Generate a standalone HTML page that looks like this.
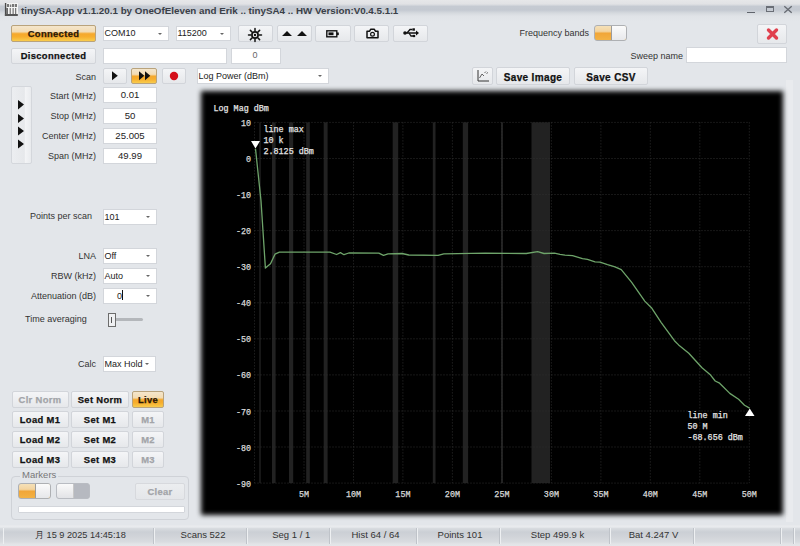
<!DOCTYPE html>
<html><head><meta charset="utf-8">
<style>
*{box-sizing:border-box}
html,body{margin:0;padding:0}
body{width:800px;height:546px;position:relative;overflow:hidden;background:#e3e6ea;font-family:"Liberation Sans",sans-serif;font-size:9px;color:#222}
.a{position:absolute}
.lbl{position:absolute;white-space:nowrap;font-size:9px;color:#333;line-height:12px}
.r{text-align:right}
.btn{position:absolute;padding-top:0.3px;-webkit-text-stroke:0.25px currentColor;border:1px solid #d2d5da;border-radius:2px;background:linear-gradient(#f4f5f7,#e6e8eb);font-weight:bold;font-size:9.4px;letter-spacing:0.35px;text-align:center;color:#111;white-space:nowrap}
.org{border-color:#b9a37c;background:linear-gradient(#f4e6cc 0%,#f3dcb4 38%,#f5a82c 52%,#f7ae2e 72%,#f9cc4c 100%);color:#2a1808}
.dis{color:#a2a4a8}
.tb{position:absolute;background:#fff;border:1px solid #d3d6db;font-size:9px;color:#222;white-space:nowrap}
.cb{position:absolute;background:#fff;border:1px solid #d3d6db;font-size:9px;color:#222;white-space:nowrap;padding-left:0.5px}
.cb:after{content:"";position:absolute;right:6px;top:50%;margin-top:-1px;border-left:2px solid transparent;border-right:2px solid transparent;border-top:2px solid #666}
</style></head><body>

<!-- title bar -->
<div class="a" style="left:0;top:0;width:800px;height:21px;background:linear-gradient(#e6e7e9 0px,#e1e2e5 4px,#c5cad2 6.5px,#c4c9d1 10px,#d5d9de 13px,#e0e3e7 16px,#e3e6ea 21px)"></div>
<svg class="a" style="left:0;top:0" width="22" height="20" viewBox="0 0 22 20">
 <rect x="6" y="3" width="12" height="11" fill="#f4f4f4"/>
 <rect x="4.9" y="3" width="1.4" height="13" fill="#4a4a4a"/>
 <rect x="4.9" y="14" width="12.9" height="2" fill="#555"/>
 <g fill="#777"><rect x="7" y="4" width="2" height="3"/><rect x="9.8" y="4.5" width="1.5" height="2.5"/><rect x="12" y="4" width="2" height="3"/><rect x="14.7" y="4" width="2.3" height="3"/></g>
 <g fill="#5a5a5a"><rect x="6.3" y="8" width="1.6" height="6"/><rect x="9.7" y="8" width="1" height="6"/><rect x="12.6" y="8" width="1" height="6"/><rect x="15.2" y="8" width="1" height="6"/></g>
</svg>
<div class="lbl" style="left:21px;top:4px;font-weight:bold;font-size:9.8px;color:#3a3f48;line-height:14px">tinySA-App v1.1.20.1 by OneOfEleven and Erik .. tinySA4 .. HW Version:V0.4.5.1.1</div>
<div class="a" style="left:747px;top:11.6px;width:8.4px;height:1.4px;background:#60646c"></div>
<div class="a" style="left:766.2px;top:6px;width:7.6px;height:6px;border:0.9px solid #6a6e76;border-top-width:2px"></div>
<svg class="a" style="left:783px;top:5px" width="10" height="9"><path d="M1.3 1.3 L8.7 7.8 M8.7 1.3 L1.3 7.8" stroke="#666a72" stroke-width="1.3"/></svg>

<!-- top row -->
<div class="btn org" style="left:11px;top:25px;width:85px;height:17px;line-height:15px">Connected</div>
<div class="btn" style="left:11px;top:48px;width:85px;height:16px;line-height:14px">Disconnected</div>
<div class="cb" style="left:103px;top:26px;width:66px;height:15px;line-height:13px">COM10</div>
<div class="cb" style="left:176px;top:26px;width:55px;height:15px;line-height:13px">115200</div>
<div class="tb" style="left:103px;top:48px;width:124px;height:15.5px"></div>
<div class="tb" style="left:231px;top:48px;width:50px;height:15.5px;line-height:13.5px;text-align:center;color:#666;padding-right:2px">0</div>

<div class="btn" style="left:238px;top:25px;width:35px;height:17px"></div>
<div class="btn" style="left:277px;top:25px;width:35px;height:17px"></div>
<div class="btn" style="left:315px;top:25px;width:36px;height:17px"></div>
<div class="btn" style="left:354px;top:25px;width:35px;height:17px"></div>
<div class="btn" style="left:393px;top:25px;width:35px;height:17px"></div>
<!-- icons -->
<svg class="a" style="left:247px;top:26.5px" width="16" height="16" viewBox="0 0 16 16">
 <g stroke="#111" stroke-width="1.5" stroke-linecap="round"><path d="M8 1.5v2.3M8 12.2v2.3M1.5 8h2.3M12.2 8h2.3M3.4 3.4l1.6 1.6M11 11l1.6 1.6M12.6 3.4L11 5M5 11l-1.6 1.6"/></g>
 <circle cx="8" cy="8" r="3.1" fill="#f0f0f0" stroke="#111" stroke-width="1.7"/><circle cx="8" cy="8" r="1.2" fill="#111"/>
</svg>
<svg class="a" style="left:281px;top:30px" width="28" height="8"><path d="M1 6 L6 1 L11 6Z M16 6 L21 1 L26 6Z" fill="#111"/></svg>
<svg class="a" style="left:326px;top:29px" width="14" height="9"><rect x="0.8" y="1.8" width="10" height="6" fill="none" stroke="#111" stroke-width="1.4"/><rect x="2.5" y="3.4" width="5" height="2.8" fill="#111"/><rect x="11" y="3.5" width="1.8" height="2.6" fill="#111"/></svg>
<svg class="a" style="left:365.5px;top:28px" width="13" height="11"><path d="M1 3.2 h2.6 l1.2-2 h3.4 l1.2 2 h2.6 v6.6 h-11z" fill="none" stroke="#111" stroke-width="1.5" stroke-linejoin="round"/><circle cx="6.5" cy="6.3" r="1.9" fill="none" stroke="#111" stroke-width="1.2"/></svg>
<svg class="a" style="left:403px;top:27px" width="16" height="12"><path d="M1 6 h12" stroke="#111" stroke-width="1.5"/><path d="M13 3.5 L16 6 L13 8.5Z" fill="#111"/><path d="M4 6 L7 2.5 h2.5 M6 6 L8 9 h2" stroke="#111" stroke-width="1.3" fill="none"/><circle cx="2" cy="6" r="1.8" fill="#111"/><rect x="9.5" y="1.3" width="2.4" height="2.4" fill="#111"/><circle cx="11" cy="9" r="1.3" fill="#111"/></svg>

<div class="lbl r" style="left:479px;top:27px;width:110px">Frequency bands</div>
<div class="a" style="left:593.5px;top:24.7px;width:33px;height:16.8px;border:1px solid #aeb0b3;border-radius:3px;background:linear-gradient(#f5e0b8 0,#f3d4a0 38%,#f1a638 52%,#f3b244 100%);overflow:hidden">
 <div class="a" style="left:16px;top:0;width:16px;height:15px;background:linear-gradient(#fbfbfb,#e6e7ea);border-left:1px solid #9c9c9c"></div>
</div>
<div class="btn" style="left:757px;top:24px;width:30px;height:20px"></div>
<svg class="a" style="left:765px;top:27px" width="15" height="14"><path d="M3.5 3 L11.5 11 M11.5 3 L3.5 11" stroke="#e0404e" stroke-width="3.4" stroke-linecap="round"/></svg>

<div class="lbl r" style="left:580px;top:50px;width:103px">Sweep name</div>
<div class="tb" style="left:686px;top:47px;width:101px;height:16px"></div>

<!-- scan row -->
<div class="lbl r" style="left:40px;top:71px;width:56px">Scan</div>
<div class="btn" style="left:103px;top:68px;width:24px;height:16px"></div>
<div class="btn org" style="left:131px;top:68px;width:26px;height:16px"></div>
<div class="btn" style="left:162px;top:68px;width:24px;height:16px"></div>
<svg class="a" style="left:111px;top:70px" width="8" height="11"><path d="M1 1.3 L6.8 5.8 L1 10.2Z" fill="#111"/></svg>
<svg class="a" style="left:138px;top:70px" width="14" height="11"><path d="M1 1.3 L6.3 5.8 L1 10.2Z M7 1.3 L12.3 5.8 L7 10.2Z" fill="#111"/></svg>
<svg class="a" style="left:168px;top:70px" width="12" height="12"><circle cx="6" cy="6" r="4.2" fill="#d40f1a"/></svg>
<div class="cb" style="left:197px;top:68px;width:132px;height:16px;line-height:14px">Log Power (dBm)</div>

<div class="btn" style="left:472px;top:67px;width:21px;height:18px"></div>
<svg class="a" style="left:476px;top:69px" width="14" height="14"><path d="M2 1 V12 H13" stroke="#333" stroke-width="1" fill="none"/><path d="M3.5 9 L6 5 L8 7 M8.5 4 l1.5-1.5 M10.5 4.5 l1.5-1" stroke="#555" stroke-width="0.9" fill="none"/></svg>
<div class="btn" style="left:496px;top:67px;width:74px;height:18px;line-height:16px;font-size:10px;padding-top:1.5px">Save Image</div>
<div class="btn" style="left:574px;top:67px;width:74px;height:18px;line-height:16px;font-size:10px;padding-top:1.5px">Save CSV</div>

<!-- left panel -->
<div class="btn" style="left:11px;top:86px;width:21px;height:78px;border-color:#d4d7dc;background:linear-gradient(90deg,#eceef1,#e6e8eb 65%,#f3f4f6 70%,#e9ebee)"></div>
<svg class="a" style="left:17px;top:99px" width="8" height="52"><path d="M1 1 L7 5.5 L1 10.5Z M1 15 L7 19.5 L1 24Z M1 27.5 L7 32 L1 36.5Z M1 40.5 L7 45 L1 49.5Z" fill="#111"/></svg>

<div class="lbl r" style="left:20px;top:90px;width:76px">Start (MHz)</div>
<div class="lbl r" style="left:20px;top:110px;width:76px">Stop (MHz)</div>
<div class="lbl r" style="left:20px;top:130px;width:76px">Center (MHz)</div>
<div class="lbl r" style="left:20px;top:150px;width:76px">Span (MHz)</div>
<div class="tb" style="left:103px;top:87px;width:54px;height:16px;line-height:14px;text-align:center;font-size:9.6px">0.01</div>
<div class="tb" style="left:103px;top:108px;width:54px;height:16px;line-height:14px;text-align:center;font-size:9.6px">50</div>
<div class="tb" style="left:103px;top:128px;width:54px;height:16px;line-height:14px;text-align:center;font-size:9.6px">25.005</div>
<div class="tb" style="left:103px;top:148px;width:54px;height:16px;line-height:14px;text-align:center;font-size:9.6px">49.99</div>

<div class="lbl r" style="left:10px;top:210px;width:82px">Points per scan</div>
<div class="cb" style="left:103px;top:209px;width:54px;height:16px;line-height:14px">101</div>
<div class="lbl r" style="left:20px;top:250px;width:76px">LNA</div>
<div class="cb" style="left:103px;top:248px;width:54px;height:16px;line-height:14px">Off</div>
<div class="lbl r" style="left:20px;top:270px;width:76px">RBW (kHz)</div>
<div class="cb" style="left:103px;top:268px;width:54px;height:16px;line-height:14px">Auto</div>
<div class="lbl r" style="left:10px;top:290px;width:86px">Attenuation (dB)</div>
<div class="cb" style="left:103px;top:288px;width:54px;height:16px;line-height:14px;padding-left:13px">0<span style="display:inline-block;width:1px;height:10px;background:#111;vertical-align:-1px;margin-left:0.2px"></span></div>
<div class="lbl" style="left:25px;top:313px">Time averaging</div>
<div class="a" style="left:109px;top:317.5px;width:34px;height:3.5px;background:#b4b7bb;border-radius:2px"></div>
<div class="a" style="left:108px;top:312.5px;width:7.5px;height:14.5px;border:1px solid #6c6c6c;background:#eff0f2"></div>
<div class="a" style="left:111px;top:316.5px;width:1px;height:6.5px;background:#555"></div>

<div class="lbl r" style="left:40px;top:358px;width:56px">Calc</div>
<div class="cb" style="left:103px;top:356px;width:53px;height:16px;line-height:14px">Max Hold</div>

<div class="btn dis" style="left:11.5px;top:391px;width:57px;height:17px;line-height:15px">Clr Norm</div>
<div class="btn" style="left:71px;top:391px;width:58px;height:17px;line-height:15px">Set Norm</div>
<div class="btn org" style="left:132px;top:391px;width:32px;height:17px;line-height:15px">Live</div>
<div class="btn" style="left:11.5px;top:411px;width:57px;height:17px;line-height:15px">Load M1</div>
<div class="btn" style="left:71px;top:411px;width:58px;height:17px;line-height:15px">Set M1</div>
<div class="btn dis" style="left:132px;top:411px;width:32px;height:17px;line-height:15px">M1</div>
<div class="btn" style="left:11.5px;top:431px;width:57px;height:17px;line-height:15px">Load M2</div>
<div class="btn" style="left:71px;top:431px;width:58px;height:17px;line-height:15px">Set M2</div>
<div class="btn dis" style="left:132px;top:431px;width:32px;height:17px;line-height:15px">M2</div>
<div class="btn" style="left:11.5px;top:451px;width:57px;height:17px;line-height:15px">Load M3</div>
<div class="btn" style="left:71px;top:451px;width:58px;height:17px;line-height:15px">Set M3</div>
<div class="btn dis" style="left:132px;top:451px;width:32px;height:17px;line-height:15px">M3</div>

<div class="a" style="left:11px;top:476px;width:178px;height:44px;border:1px solid #cfd2d7;border-radius:4px"></div>
<div class="lbl" style="left:20px;top:469px;padding:0 2px;background:#e3e6ea;color:#777;font-size:9.5px">Markers</div>
<div class="a" style="left:18px;top:483px;width:33px;height:16px;border:1px solid #aeb0b3;border-radius:3px;background:linear-gradient(#f5e0b8 0,#f3d4a0 38%,#f1a638 52%,#f3b244 100%);overflow:hidden">
 <div class="a" style="left:16px;top:0;width:16px;height:14px;background:linear-gradient(#fbfbfb,#e6e7ea);border-left:1px solid #9c9c9c"></div>
</div>
<div class="a" style="left:56px;top:483px;width:34px;height:16px;border:1px solid #b9bcc2;border-radius:3px;background:#b6b9c0;overflow:hidden">
 <div class="a" style="left:0;top:0;width:17px;height:14px;background:linear-gradient(#fafafa,#e2e3e6);border-right:1px solid #c8c8c8"></div>
</div>
<div class="btn dis" style="left:135px;top:483px;width:50px;height:17px;line-height:15px;font-weight:bold;background:linear-gradient(#eceef0,#e4e6e9);border-color:#d7d9dd">Clear</div>
<div class="a" style="left:18px;top:506px;width:167px;height:7px;background:#fff;border:1px solid #d3d6db;border-radius:1px"></div>

<!-- chart -->
<div class="a" style="left:786px;top:80px;width:7px;height:442px;background:#e9ebee"></div>
<div class="a" style="left:200.5px;top:90.5px;width:582.5px;height:424.5px;background:#000;filter:blur(2.5px)"></div>
<svg class="a" style="left:0;top:0" width="800" height="546" viewBox="0 0 800 546">
 <g fill="#222"><rect x="259" y="122.4" width="2" height="360.7" fill="#171717"/><rect x="272" y="122.4" width="3.6" height="360.7"/><rect x="289" y="122.4" width="4.2" height="360.7"/><rect x="306.2" y="122.4" width="3.6" height="360.7"/><rect x="323.7" y="122.4" width="3.9" height="360.7"/><rect x="392.7" y="122.4" width="5.5" height="360.7"/><rect x="432.8" y="122.4" width="2.7" height="360.7"/><rect x="462.8" y="122.4" width="5.3" height="360.7"/><rect x="501" y="122.4" width="2" height="360.7"/><rect x="531.5" y="122.4" width="18.5" height="360.7"/></g>
 <g stroke="#2e2e2e" stroke-width="1" stroke-dasharray="1 2" fill="none">
  <path d="M254.5 122.4V483.1M304.0 122.4V483.1M353.5 122.4V483.1M402.9 122.4V483.1M452.4 122.4V483.1M501.9 122.4V483.1M551.4 122.4V483.1M600.9 122.4V483.1M650.3 122.4V483.1M699.8 122.4V483.1M749.3 122.4V483.1"/>
  <path d="M254.5 122.4H749.3M254.5 158.5H749.3M254.5 194.5H749.3M254.5 230.6H749.3M254.5 266.7H749.3M254.5 302.8H749.3M254.5 338.8H749.3M254.5 374.9H749.3M254.5 411.0H749.3M254.5 447.0H749.3M254.5 483.1H749.3"/>
 </g>
 <g font-family="Liberation Mono" font-size="8.4" fill="#d8d8d8" stroke="#d8d8d8" stroke-width="0.25" text-anchor="end">
  <text x="251" y="125.9">10</text><text x="251" y="162.0">0</text><text x="251" y="198.0">-10</text><text x="251" y="234.1">-20</text><text x="251" y="270.2">-30</text><text x="251" y="306.3">-40</text><text x="251" y="342.3">-50</text><text x="251" y="378.4">-60</text><text x="251" y="414.5">-70</text><text x="251" y="450.5">-80</text><text x="251" y="486.6">-90</text>
 </g>
 <g font-family="Liberation Mono" font-size="8.4" fill="#d8d8d8" stroke="#d8d8d8" stroke-width="0.25" text-anchor="middle">
  <text x="304.0" y="496.5">5M</text><text x="353.5" y="496.5">10M</text><text x="402.9" y="496.5">15M</text><text x="452.4" y="496.5">20M</text><text x="501.9" y="496.5">25M</text><text x="551.4" y="496.5">30M</text><text x="600.9" y="496.5">35M</text><text x="650.3" y="496.5">40M</text><text x="699.8" y="496.5">45M</text><text x="749.3" y="496.5">50M</text>
 </g>
 <g font-family="Liberation Mono" font-size="8.4" fill="#e4e4e4" stroke="#e4e4e4" stroke-width="0.25">
  <text x="213.5" y="111.2">Log Mag dBm</text>
  <text x="263.5" y="131.7">line max</text><text x="263.5" y="143.2">10 k</text><text x="263.5" y="153.9">2.8125 dBm</text>
  <text x="687.5" y="417.9">line min</text><text x="687.5" y="429.1">50 M</text><text x="687.5" y="440">-68.656 dBm</text>
 </g>
 <polyline transform="translate(0,0.7)" fill="none" stroke="#6ea46a" stroke-width="1.3" stroke-linejoin="round" points="255.5,148 261,200 265.4,267.4 270.5,263 275,253.5 279.4,251.5 330,251.5 336.6,253.8 340.4,251.9 344,254 348.8,252.3 378.8,252.5 383.5,254.7 388,253.2 402,252.8 408.8,254.3 438.1,254.7 443.8,253.2 485,252.5 526.3,252.8 537.6,251 544,252.8 554.5,252.5 560,253.75 565,254.4 572.5,255 577.5,256.5 582.5,258 587.5,258.75 595,261.25 600,261.5 607.5,264 615,266.25 621.25,269 631.5,281.5 644.75,300.4 651.4,307 661.25,321.9 674.45,340 678.6,344.2 688.8,352.5 702,367.1 710,373.7 715.2,380.3 719.6,382.5 729.8,392.7 738.6,398.6 744.5,404.5 749.6,407.4"/>
 <path d="M251 141 L260 141 L255.5 148.5Z" fill="#fff"/>
 <path d="M745 416 L754.5 416 L749.75 408.5Z" fill="#fff"/>
</svg>

<!-- status bar -->
<div class="a" style="left:0;top:525px;width:800px;height:21px;background:linear-gradient(#e6e8eb 0,#e9ebee 2px,#d8dbdf 3.5px,#cbcfd5 7px,#d1d4d9 12px,#d9dce0 17px,#e2e4e7 19px,#e4e6e9 21px)"></div>
<div class="a" style="left:3px;top:528px;width:1px;height:16px;background:#eef0f2"></div>
<div class="a" style="left:153px;top:528px;width:1px;height:16px;background:#bfc3c9"></div><div class="a" style="left:154px;top:528px;width:1px;height:16px;background:#eef0f2"></div>
<div class="a" style="left:246px;top:528px;width:1px;height:16px;background:#bfc3c9"></div><div class="a" style="left:247px;top:528px;width:1px;height:16px;background:#eef0f2"></div>
<div class="a" style="left:329px;top:528px;width:1px;height:16px;background:#bfc3c9"></div><div class="a" style="left:330px;top:528px;width:1px;height:16px;background:#eef0f2"></div>
<div class="a" style="left:416px;top:528px;width:1px;height:16px;background:#bfc3c9"></div><div class="a" style="left:417px;top:528px;width:1px;height:16px;background:#eef0f2"></div>
<div class="a" style="left:499px;top:528px;width:1px;height:16px;background:#bfc3c9"></div><div class="a" style="left:500px;top:528px;width:1px;height:16px;background:#eef0f2"></div>
<div class="a" style="left:609px;top:528px;width:1px;height:16px;background:#bfc3c9"></div><div class="a" style="left:610px;top:528px;width:1px;height:16px;background:#eef0f2"></div>
<div class="a" style="left:693px;top:528px;width:1px;height:16px;background:#bfc3c9"></div><div class="a" style="left:694px;top:528px;width:1px;height:16px;background:#eef0f2"></div>
<div class="a" style="left:780px;top:528px;width:1px;height:16px;background:#bfc3c9"></div><div class="a" style="left:781px;top:528px;width:1px;height:16px;background:#eef0f2"></div>
<div class="a" style="left:793px;top:528px;width:1px;height:16px;background:#bfc3c9"></div><div class="a" style="left:794px;top:528px;width:1px;height:16px;background:#eef0f2"></div>
<div class="lbl" style="left:35px;top:528.5px;font-size:9.2px;color:#333">月 15 9 2025 14:45:18</div>
<div class="lbl" style="left:157px;top:528.5px;width:92px;text-align:center;font-size:9.5px;color:#333">Scans 522</div>
<div class="lbl" style="left:249.7px;top:528.5px;width:83px;text-align:center;font-size:9.5px;color:#333">Seg 1 / 1</div>
<div class="lbl" style="left:332px;top:528.5px;width:87px;text-align:center;font-size:9.5px;color:#333">Hist 64 / 64</div>
<div class="lbl" style="left:418.5px;top:528.5px;width:83px;text-align:center;font-size:9.5px;color:#333">Points 101</div>
<div class="lbl" style="left:502.5px;top:528.5px;width:110px;text-align:center;font-size:9.5px;color:#333">Step 499.9 k</div>
<div class="lbl" style="left:611.5px;top:528.5px;width:84px;text-align:center;font-size:9.5px;color:#333">Bat 4.247 V</div>

</body></html>
